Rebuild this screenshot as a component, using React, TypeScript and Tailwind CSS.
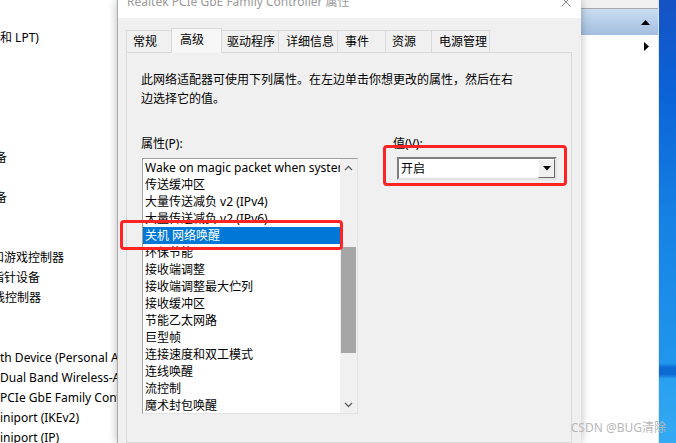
import React from 'react';

const font = "font-['Noto_Sans','Noto_Sans_CJK_SC',sans-serif]";

// left tree rows (20px pitch), text already clipped on the left
const treeRows: { i: number; text: string; ml: string }[] = [
    { i: 0, text: '和 LPT)', ml: 'ml-0' },
    { i: 6, text: '设备', ml: '-ml-[17px]' },
    { i: 8, text: '设备', ml: '-ml-[17px]' },
    { i: 11, text: '和游戏控制器', ml: '-ml-[8px]' },
    { i: 12, text: '指针设备', ml: '-ml-[8px]' },
    { i: 13, text: '线控制器', ml: '-ml-[7px]' },
    { i: 16, text: 'th Device (Personal Area Network)', ml: 'ml-0' },
    { i: 17, text: 'Dual Band Wireless-AC 3168', ml: 'ml-0' },
    { i: 18, text: 'PCIe GbE Family Controller', ml: 'ml-0' },
    { i: 19, text: 'iniport (IKEv2)', ml: 'ml-0' },
    { i: 20, text: 'iniport (IP)', ml: 'ml-0' },
];

const tabs = [
    { label: '常规', w: 'w-[46px]', pl: 'pl-[6px]' },
    { label: '高级', w: 'w-[51px]', pl: 'pl-[8px]', active: true },
    { label: '驱动程序', w: 'w-[58px]', pl: 'pl-[5px]' },
    { label: '详细信息', w: 'w-[60px]', pl: 'pl-[7px]' },
    { label: '事件', w: 'w-[49px]', pl: 'pl-[7px]' },
    { label: '资源', w: 'w-[47px]', pl: 'pl-[6px]' },
    { label: '电源管理', w: 'w-[59px]', pl: 'pl-[7px]' },
];

const props = [
    'Wake on magic packet when system',
    '传送缓冲区',
    '大量传送减负 v2 (IPv4)',
    '大量传送减负 v2 (IPv6)',
    '关机 网络唤醒',
    '环保节能',
    '接收端调整',
    '接收端调整最大伫列',
    '接收缓冲区',
    '节能乙太网路',
    '巨型帧',
    '连接速度和双工模式',
    '连线唤醒',
    '流控制',
    '魔术封包唤醒',
];

function Chevron({ up }: { up?: boolean }) {
    return (
        <svg width="9" height="6" viewBox="0 0 9 6">
            <polyline
                points={up ? '1,5 4.5,1.5 8,5' : '1,1 4.5,4.5 8,1'}
                fill="none"
                stroke="#606060"
                strokeWidth="1.3"
            />
        </svg>
    );
}

export default function App() {
    return (
        <div className={`relative flex h-[443px] w-[676px] overflow-hidden bg-white text-[12px] text-black ${font}`}>
            {/* device manager behind the dialog */}
            <div className="flex w-[117px] shrink-0 flex-col overflow-hidden pt-[28px]">
                {Array.from({ length: 21 }).map((_, i) => {
                    const row = treeRows.find((r) => r.i === i);
                    return (
                        <div key={i} className="h-[20px] shrink-0 whitespace-nowrap leading-[20px]">
                            {row && <span className={`block ${row.ml}`}>{row.text}</span>}
                        </div>
                    );
                })}
            </div>

            {/* properties dialog */}
            <div className="relative z-10 flex w-[464px] shrink-0 flex-col border-l border-[#aaaaaa] bg-[#f0f0f0] shadow-[0_0_9px_rgba(0,0,0,0.28)]">
                <div className="flex h-[18px] shrink-0 items-start justify-between overflow-hidden bg-white pl-[9px] pr-[10px]">
                    <span className="-mt-[6px] whitespace-nowrap leading-[16px] text-[#9a9a9a]">
                        Realtek PCIe GbE Family Controller 属性
                    </span>
                    <svg width="10" height="10" viewBox="0 0 10 10" className="-mt-[3px]">
                        <path d="M0.5 0.5 L9.5 9.5 M9.5 0.5 L0.5 9.5" stroke="#8a8a8a" strokeWidth="1" />
                    </svg>
                </div>

                <div className="flex h-[34px] shrink-0 items-end pl-[9px]">
                    {tabs.map((t) =>
                        t.active ? (
                            <div
                                key={t.label}
                                className={`relative z-10 -mb-px -ml-px flex h-[25px] items-start border border-b-0 border-[#d9d9d9] bg-[#f7f7f7] pt-[2px] ${t.w} ${t.pl}`}
                            >
                                {t.label}
                            </div>
                        ) : (
                            <div
                                key={t.label}
                                className={`-ml-px flex h-[22px] items-center border border-b-0 border-[#d9d9d9] bg-[#f0f0f0] ${t.w} ${t.pl}`}
                            >
                                {t.label}
                            </div>
                        ),
                    )}
                </div>

                <div className="ml-[8px] flex w-[446px] flex-1 flex-col border border-[#d9d9d9] bg-[#f0f0f0] pl-[14px] pt-[17px]">
                    <p className="leading-[19px]">
                        此网络适配器可使用下列属性。在左边单击你想更改的属性，然后在右
                        <br />
                        边选择它的值。
                    </p>

                    <div className="mt-[26px] flex">
                        <div className="flex w-[216px] flex-col">
                            <div className="leading-[19px]">属性(P):</div>
                            <div className="relative ml-px mt-[5px] flex h-[256px] w-[216px] border border-b-[#e3e3e3] border-l-[#a0a0a0] border-r-[#e3e3e3] border-t-[#a0a0a0] bg-white">
                                <div className="flex flex-1 flex-col overflow-hidden">
                                    {props.map((p, i) => (
                                        <div
                                            key={p}
                                            className={`h-[17px] shrink-0 whitespace-nowrap pl-[2px] leading-[17px] ${
                                                i === 4 ? 'bg-[#0078d7] text-white' : ''
                                            }`}
                                        >
                                            {p}
                                        </div>
                                    ))}
                                </div>
                                <div className="flex w-[17px] flex-col bg-[#f0f0f0]">
                                    <div className="flex h-[17px] items-center justify-center">
                                        <Chevron up />
                                    </div>
                                    <div className="flex-1">
                                        <div className="ml-px mt-[71px] h-[106px] w-[15px] bg-[#a6a6a6]" />
                                    </div>
                                    <div className="flex h-[17px] items-center justify-center">
                                        <Chevron />
                                    </div>
                                </div>
                                <div className="absolute left-[-23px] top-[61px] h-[30px] w-[223px] rounded-[4px] border-[3px] border-[#ff2424]" />
                            </div>
                        </div>

                        <div className="ml-[36px] flex flex-col">
                            <div className="leading-[19px]">值(V):</div>
                            <div className="relative ml-[4px] mt-[4px] flex h-[23px] w-[160px] border-2 border-b-[#e3e3e3] border-l-[#808080] border-r-[#e3e3e3] border-t-[#808080] bg-white">
                                <div className="flex-1 pl-[2px] leading-[19px]">开启</div>
                                <div className="flex w-[17px] items-center justify-center border border-b-[#696969] border-l-[#ffffff] border-r-[#696969] border-t-[#ffffff] bg-[#f0f0f0]">
                                    <svg width="8" height="5" viewBox="0 0 8 5">
                                        <polygon points="0,0 8,0 4,4.5" fill="#000" />
                                    </svg>
                                </div>
                                <div className="absolute left-[-16px] top-[-14px] h-[41px] w-[184px] rounded-[4px] border-[3px] border-[#ff2424]" />
                            </div>
                        </div>
                    </div>
                </div>
            </div>

            {/* device manager right part */}
            <div className="flex w-[78px] shrink-0 flex-col border-r border-[#e6e6e6] bg-white">
                <div className="h-[9px] border-b border-[#a9a9a9] bg-[#f0f0f0]" />
                <div className="flex h-[26px] items-center justify-end bg-[linear-gradient(180deg,#c9ddf1,#a3bedf)] pr-[8px]">
                    <svg width="9" height="5" viewBox="0 0 9 5">
                        <polygon points="0,5 9,5 4.5,0" fill="#000" />
                    </svg>
                </div>
                <div className="flex h-[22px] items-center justify-end pr-[9px]">
                    <svg width="5" height="9" viewBox="0 0 5 9">
                        <polygon points="0,0 5,4.5 0,9" fill="#000" />
                    </svg>
                </div>
            </div>

            {/* desktop */}
            <div className="flex-1 bg-[linear-gradient(180deg,#1652c4_0%,#0a62d6_20%,#1682e4_50%,#2196ec_82%,#0c6bd3_83%,#0c6bd3_84.5%,#29a0f0_85.5%,#35aaf3_100%)]" />

            <div className="absolute bottom-[7px] right-[10px] z-20 whitespace-nowrap leading-[16px] text-[#b8b8b8]">
                CSDN @BUG清除
            </div>
        </div>
    );
}
